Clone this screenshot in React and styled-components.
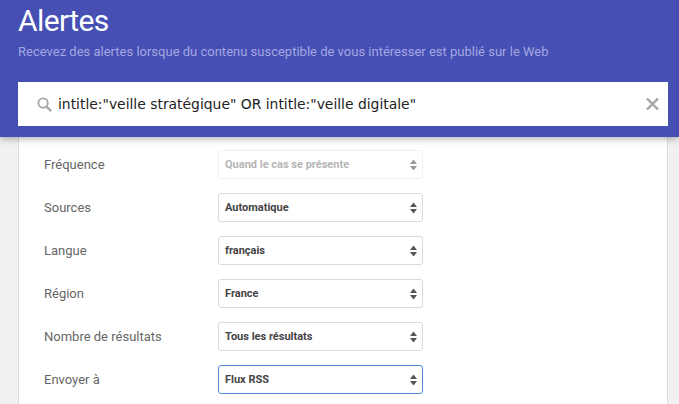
import React from "react";
import styled, { createGlobalStyle } from "styled-components";

const Global = createGlobalStyle`
  html, body { margin: 0; padding: 0; height: 404px; overflow: hidden; background: #f1f1f1; }
  * { box-sizing: border-box; }
`;
const Page = styled.div`
  width: 679px;
  height: 404px;
  overflow: hidden;
  font-family: Roboto, "Liberation Sans", sans-serif;
`;
const Header = styled.header`
  position: relative;
  z-index: 1;
  height: 137px;
  padding: 0 11px 0 18px;
  background: #464fb3;
  box-shadow: 0 2px 7px rgba(0, 0, 0, 0.3);
`;
const Title = styled.h1`
  margin: 0;
  padding-top: 3px;
  height: 41px;
  font-size: 30px;
  line-height: 36px;
  font-weight: 400;
  letter-spacing: -0.6px;
  color: #fff;
`;
const Subtitle = styled.p`
  margin: 0;
  height: 41px;
  padding-top: 1px;
  font-size: 13px;
  line-height: 20px;
  color: #a3a7e2;
`;
const SearchBox = styled.div`
  display: flex;
  align-items: center;
  height: 44px;
  padding: 0 8px 0 19px;
  background: #fff;
`;
const QueryText = styled.span`
  flex: 1;
  margin-left: 6px;
  font-family: "DejaVu Sans", sans-serif;
  font-size: 13.9px;
  color: #222;
  white-space: nowrap;
`;
const Card = styled.main`
  width: 650px;
  height: 267px;
  margin-left: 18px;
  padding: 13px 25px 0;
  background: #fff;
  border-left: 1px solid #dcdcdc;
  border-right: 1px solid #dcdcdc;
  display: flex;
  flex-direction: column;
  gap: 14px;
`;
const Row = styled.div`
  display: flex;
  align-items: center;
  height: 29px;
`;
const Label = styled.label`
  width: 174px;
  font-size: 13px;
  color: #666;
`;
const Select = styled.div`
  display: flex;
  align-items: center;
  justify-content: space-between;
  width: 205px;
  height: 29px;
  padding: 0 5px 0 6px;
  border-radius: 3px;
  border: 1px solid ${(p) => (p.$focus ? "#4f8ad6" : p.$disabled ? "#f0f0f0" : "#dadada")};
  background: #fff;
  font-size: 11px;
  font-weight: 700;
  color: ${(p) => (p.$disabled ? "#b5b5b5" : "#444")};
`;

const SearchIcon = () => (
  <svg width="15" height="15" viewBox="0 0 16 16" fill="none" stroke="#a8a8a8" strokeWidth="2">
    <circle cx="6.5" cy="6.5" r="5" />
    <path d="M10.3 10.3 15 15" strokeWidth="2.6" />
  </svg>
);
const ClearIcon = () => (
  <svg width="16" height="16" viewBox="0 0 16 16" fill="none" stroke="#a4a4a4" strokeWidth="2.4">
    <path d="M3 2.5 14 13.5M14 2.5 3 13.5" />
  </svg>
);
const Arrows = ({ disabled }) => (
  <svg width="7" height="12" viewBox="0 0 7 12" fill={disabled ? "#999" : "#555"}>
    <path d="M3.5 0.5 7 5H0zM0 7h7l-3.5 4.5z" />
  </svg>
);

const rows = [
  ["Fréquence", "Quand le cas se présente", { $disabled: true }],
  ["Sources", "Automatique", {}],
  ["Langue", "français", {}],
  ["Région", "France", {}],
  ["Nombre de résultats", "Tous les résultats", {}],
  ["Envoyer à", "Flux RSS", { $focus: true }],
];

export default function App() {
  return (
    <Page>
      <Global />
      <Header>
        <Title>Alertes</Title>
        <Subtitle>Recevez des alertes lorsque du contenu susceptible de vous intéresser est publié sur le Web</Subtitle>
        <SearchBox>
          <SearchIcon />
          <QueryText>intitle:"veille stratégique" OR intitle:"veille digitale"</QueryText>
          <ClearIcon />
        </SearchBox>
      </Header>
      <Card>
        {rows.map(([label, value, props]) => (
          <Row key={label}>
            <Label>{label}</Label>
            <Select {...props}>
              {value}
              <Arrows disabled={props.$disabled} />
            </Select>
          </Row>
        ))}
      </Card>
    </Page>
  );
}
